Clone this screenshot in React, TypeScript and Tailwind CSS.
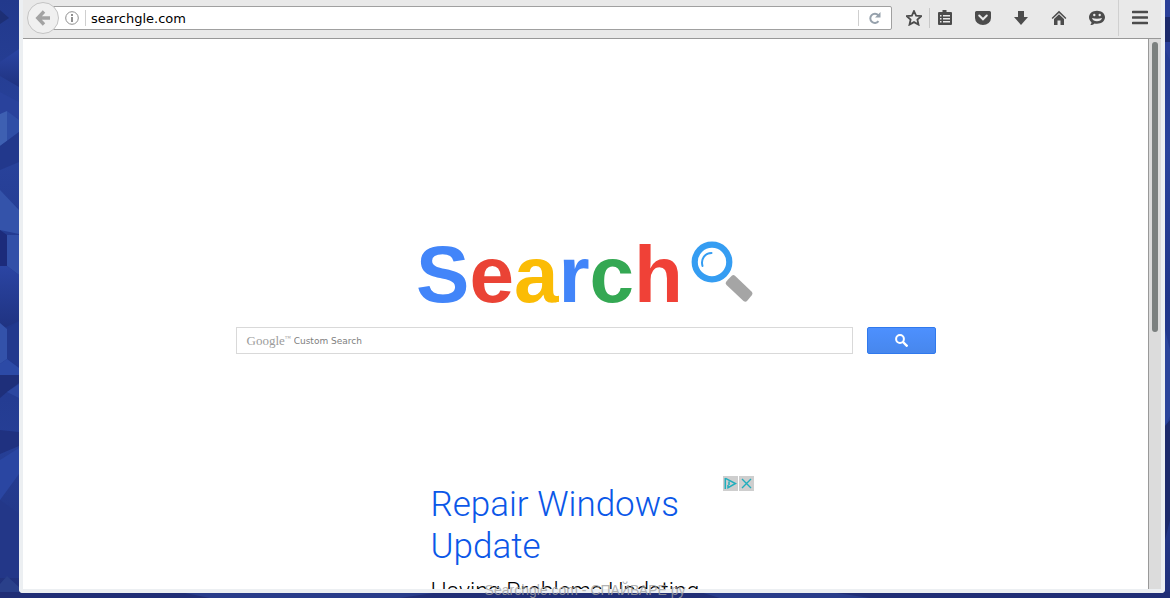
import { useState } from 'react';
import type { ReactNode } from 'react';

function Wallpaper() {
  return (
    <svg
      className="absolute inset-0 h-full w-full"
      viewBox="0 0 1170 598"
      preserveAspectRatio="none"
      aria-hidden="true"
    >
      <defs>
        <linearGradient id="wall" x1="0" y1="0" x2="0" y2="1">
          <stop offset="0" stopColor="#22398c" />
          <stop offset="0.25" stopColor="#29439c" />
          <stop offset="0.5" stopColor="#20368a" />
          <stop offset="0.75" stopColor="#263f96" />
          <stop offset="1" stopColor="#20307a" />
        </linearGradient>
        <linearGradient id="shade" x1="0" y1="0" x2="0" y2="1">
          <stop offset="0" stopColor="#2b45a3" />
          <stop offset="1" stopColor="#1f3280" />
        </linearGradient>
      </defs>
      <rect width="1170" height="598" fill="url(#wall)" />
      <path d="M0 10l9 8-9 6z" fill="#1d2f75" />
      <path d="M0 62l19-13v38L0 76z" fill="url(#shade)" />
      <path d="M0 92l19 10v20l-12-10-7 2z" fill="#29429c" />
      <path d="M0 114l7-3v30L0 146z" fill="#3e60b2" />
      <path d="M7 111l12 9v12L7 141z" fill="#2f4ea6" />
      <path d="M0 146l19-14v30L0 170z" fill="#22388c" />
      <path d="M0 190l19 20v24L0 230z" fill="#3453aa" />
      <path d="M0 230l7 5v31H0z" fill="#1c2b7b" />
      <path d="M7 235h12v40L7 266z" fill="#3250a8" />
      <path d="M0 266h7l12 9v46L0 330z" fill="url(#shade)" />
      <path d="M0 323l7 6v30L0 364z" fill="#3352aa" />
      <path d="M7 329l12-8v46L7 359z" fill="#22398e" />
      <path d="M0 364l7-5 12 9v7H0z" fill="#2c4aa6" />
      <path d="M0 375h19v8L7 392l-7 6z" fill="#1e2f7a" />
      <path d="M7 392l12-8v14z" fill="#2c47a0" />
      <path d="M0 430l19 2v14L0 454z" fill="#1f3180" />
      <path d="M0 460l19-12v26L0 500z" fill="#2a46a2" />
      <path d="M0 500l19 14v64H0z" fill="#233788" />
      <path d="M7 576l12 11v5H0v-8z" fill="#2a408a" />
      <path d="M0 592h1170v6H0z" fill="#202e76" />
      <path d="M180 592h260l-40 6H210zM700 592h130l40 6H720z" fill="#283c8a" />
      <path d="M1165 0h5v60l-5-10z" fill="#2a4099" />
      <path d="M1165 17h5v25h-5z" fill="#1b2a6c" />
      <path d="M1165 330l5 20v66l-5 10z" fill="#2b459c" />
      <path d="M1165 426l5-6v100l-5 20z" fill="#1c2a6c" />
    </svg>
  );
}

function ToolButton({ label, children }: { label: string; children: ReactNode }) {
  return (
    <button type="button" aria-label={label} className="flex h-6 w-[38px] items-center justify-center text-[#4c4c4c]">
      <svg className="h-4 w-4" viewBox="0 0 16 16" fill="currentColor" aria-hidden="true">
        {children}
      </svg>
    </button>
  );
}

function Toolbar() {
  const [url, setUrl] = useState('searchgle.com');

  return (
    <header className="flex h-[39px] shrink-0 items-start border-b border-[#989898] bg-[#e9e9e9]">
      {/* Address bar */}
      <div className="flex min-w-0 flex-1 items-center pt-[2px] pl-1">
        <button
          type="button"
          aria-label="Back"
          className="z-10 flex h-8 w-8 shrink-0 items-center justify-center rounded-full border border-[#c4c4c4] bg-[#f0f0f0] text-[#a3a3a3]"
        >
          <svg className="h-4 w-4" viewBox="0 0 16 16" fill="none" stroke="currentColor" strokeWidth="3.4" aria-hidden="true">
            <path d="M9 1.5L2.8 8L9 14.5M3.5 8H15" />
          </svg>
        </button>
        <div className="-ml-2 flex h-6 min-w-0 flex-1 items-center rounded-r-xs border border-[#a0a0a0] bg-white pl-[13px]">
          <svg className="h-[14px] w-[14px] shrink-0" viewBox="0 0 14 14" fill="none" stroke="#8f8f8f" aria-hidden="true">
            <circle cx="7" cy="7" r="6.3" />
            <path d="M7 3v2M7 6v5" strokeWidth="2" />
          </svg>
          <span className="mr-[5px] ml-[6px] h-4 w-px bg-[#cfcfcf]" />
          <input
            type="text"
            aria-label="Address"
            value={url}
            onChange={(e) => setUrl(e.target.value)}
            className="min-w-0 flex-1 bg-transparent pt-px font-['DejaVu_Sans',sans-serif] text-[13px] text-black outline-none"
          />
          <span className="h-4 w-px bg-[#cfcfcf]" />
          <button type="button" aria-label="Reload" className="flex w-8 items-center justify-center text-[#96a1ac]">
            <svg className="h-3 w-3" viewBox="0 0 12 12" fill="none" stroke="currentColor" strokeWidth="2" aria-hidden="true">
              <path d="M9.5 9.2A4.6 4.6 0 1 1 9.3 3.2" />
              <path d="M11.5 0v5.5H6z" fill="currentColor" stroke="none" />
            </svg>
          </button>
        </div>
      </div>

      {/* Toolbar icons */}
      <div className="flex items-center pt-[6px] pl-[3px]">
        <ToolButton label="Bookmark this page">
          <path
            d="M8 1l2.1 4.700 5.100.5-3.800 3.400 1.100 5L8 12.100l-4.500 2.500 1.100-5L.8 6.200l5.100-.5z"
            fill="none"
            stroke="currentColor"
            strokeWidth="1.8"
          />
        </ToolButton>
        <span className="-mx-1 h-5 w-px bg-[#c8c8c8]" />
        <ToolButton label="Bookmarks list">
          <path
            fillRule="evenodd"
            d="M5.500 0h4v2h4.500a1 1 0 0 1 1 1v11a1 1 0 0 1-1 1H2a1 1 0 0 1-1-1V3a1 1 0 0 1 1-1h3.500zM3 5v1.500h1.500V5zM6 5v1.500h7V5zM3 8v1.500h1.500V8zM6 8v1.500h7V8zM3 11v1.500h1.500V11zM6 11v1.500h7V11z"
          />
        </ToolButton>
        <ToolButton label="Save to Pocket">
          <path d="M1.500 1h13A1.500 1.500 0 0 1 16 2.500V8A8 7 0 0 1 0 8V2.500A1.500 1.500 0 0 1 1.500 1z" />
          <path d="M4.200 5.500L8 9.300l3.800-3.800" fill="none" stroke="#e9e9e9" strokeWidth="2" strokeLinecap="round" />
        </ToolButton>
        <ToolButton label="Downloads">
          <path d="M5 1h6v6h4l-7 8-7-8h4z" />
        </ToolButton>
        <ToolButton label="Home">
          <path d="M8 .8L.6 8l1 1L8 2.900 14.400 9l1-1z" />
          <path d="M8 4.200L3 9v6h3.500v-4.500h3V15H13V9z" />
        </ToolButton>
        <ToolButton label="Chat">
          <path d="M8 .8C12.500.8 16 3.600 16 7.300S12.500 13.800 8 13.800c-.9 0-1.700-.1-2.500-.3C4.500 14.500 3 15 1.300 15c.8-.8 1.200-1.700 1.200-2.800C1 11 0 9.300 0 7.300 0 3.600 3.500.8 8 .8z" />
          <g fill="#e9e9e9">
            <circle cx="5.300" cy="5" r="1.200" />
            <circle cx="10.700" cy="5" r="1.200" />
            <path d="M3 8c3 1 7 1 10 0-.6 2.200-2.500 3.300-5 3.300S3.600 10.200 3 8z" />
          </g>
        </ToolButton>
      </div>
      <div className="ml-[2px] h-9 w-px bg-[#d0d0d0]" />
      <div className="px-[2px] pt-[6px]">
        <ToolButton label="Open menu">
          <path d="M1 2h14M1 7.500h14M1 13h14" stroke="currentColor" strokeWidth="2.600" strokeLinecap="round" />
        </ToolButton>
      </div>
    </header>
  );
}

const letters = [
  { char: 'S', color: 'text-[#4285f9]' },
  { char: 'e', color: 'text-[#ea4335]' },
  { char: 'a', color: 'text-[#fbbc05]' },
  { char: 'r', color: 'text-[#4285f9]' },
  { char: 'c', color: 'text-[#34a853]' },
  { char: 'h', color: 'text-[#f04137]' },
];

function Logo() {
  return (
    <div className="flex items-start justify-center gap-2 pr-[2px]">
      <h1 className="font-['Liberation_Sans',Arial,sans-serif] text-[80px] leading-[80px] font-bold">
        {letters.map((l) => (
          <span key={l.char} className={l.color}>
            {l.char}
          </span>
        ))}
      </h1>
      <svg className="mt-[6px] h-[62px] w-[62px]" viewBox="0 0 62 62" aria-hidden="true">
        <path d="M37 38.500l4-4q1.500-1 3 .2L61 51q1 1.500 0 3l-5 6q-1.500 1.500-3.500 0L35.500 44q-1.500-1.500-.5-3z" fill="#a5a5a5" />
        <circle cx="21" cy="21" r="17.300" fill="none" stroke="#359df2" strokeWidth="6.200" />
        <path d="M11.500 25C9.500 18 14 12 20.500 12" fill="none" stroke="#359df2" strokeWidth="2" strokeLinecap="round" />
      </svg>
    </div>
  );
}

function SearchForm() {
  return (
    <form className="mt-3 flex w-full max-w-[700px] items-center gap-[14px]" onSubmit={(e) => e.preventDefault()}>
      <div className="flex h-[27px] min-w-0 flex-1 items-center gap-[3px] border border-[#d9d9d9] bg-white pl-[10px]">
        <label htmlFor="query" className="flex font-['Liberation_Serif',serif] text-[13px] leading-4 text-[#9c9c9c]">
          Google<span className="text-[6px] leading-[10px]">™</span>
        </label>
        <input
          id="query"
          type="text"
          placeholder="Custom Search"
          className="min-w-0 flex-1 bg-transparent pt-[3px] font-['DejaVu_Sans',sans-serif] text-[9px] text-[#333] outline-none placeholder:text-[#808080]"
        />
      </div>
      <button
        type="submit"
        aria-label="Search"
        className="flex h-[27px] w-[69px] items-center justify-center rounded-xs border border-[#3079ed] bg-linear-to-b from-[#4d90fe] to-[#4787ed]"
      >
        <svg className="h-[13px] w-[13px]" viewBox="0 0 13 13" fill="none" stroke="#fff" aria-hidden="true">
          <circle cx="5" cy="5" r="3.900" strokeWidth="2" />
          <path d="M8 8l4.500 4.500" strokeWidth="2.400" />
        </svg>
      </button>
    </form>
  );
}

function Ad() {
  return (
    <section className="mt-[122px] w-full max-w-[336px]">
      <div className="flex items-start">
        <h2 className="min-w-0 flex-1 pt-2 pl-[13px] font-[Roboto,sans-serif] text-[35px] leading-[42px] font-light text-[#0b57e8]">
          <a href="#repair">
            Repair Windows
            <br />
            Update
          </a>
        </h2>
        <div className="flex gap-px">
          <a href="#adchoices" aria-label="AdChoices" className="flex h-[15px] w-[15px] items-center justify-center bg-[#cecece]">
            <svg className="h-[13px] w-[13px]" viewBox="0 0 13 13" fill="none" stroke="#20aebd" strokeWidth="1.500" aria-hidden="true">
              <path d="M1.300 1v11M1.500 1.300l10 5.200L4 10.700V8M5 4.500v3.500" />
            </svg>
          </a>
          <button type="button" aria-label="Close ad" className="flex h-[15px] w-[15px] items-center justify-center bg-[#cecece]">
            <svg className="h-[11px] w-[11px]" viewBox="0 0 11 11" fill="none" stroke="#20aebd" strokeWidth="1.400" aria-hidden="true">
              <path d="M1 1l9 9M10 1l-9 9" />
            </svg>
          </button>
        </div>
      </div>
      <p className="mt-[10px] pl-[13px] font-[Roboto,sans-serif] text-[23px] leading-7 font-light whitespace-nowrap text-black">
        Having Problems Updating
      </p>
    </section>
  );
}

export default function App() {
  return (
    <div className="relative flex h-screen flex-col overflow-hidden pr-[5px] pb-[5px] pl-[19px]">
      <Wallpaper />

      {/* Browser window */}
      <div className="relative flex min-h-0 flex-1 flex-col rounded-b border-x-4 border-b-4 border-[#eceff2]">
        <Toolbar />
        <div className="flex min-h-0 flex-1">
          <main className="flex min-w-0 flex-1 flex-col items-center overflow-hidden bg-white pt-[196px]">
            <Logo />
            <SearchForm />
            <Ad />
          </main>
          <div className="w-[13px] border-l border-[#999] bg-[#dcdcdc] pt-[3px] pl-[3px]">
            <div className="h-[53%] w-[6px] rounded-full bg-[#7b807f]" />
          </div>
        </div>
      </div>

      {/* Watermark */}
      <p className="absolute inset-x-0 bottom-0 text-center font-['Liberation_Sans',Arial,sans-serif] text-[14px] leading-4 text-[#a0a0a0]/80">
        Searchgle.com - СПАЙВАРЕ ру
      </p>
    </div>
  );
}
